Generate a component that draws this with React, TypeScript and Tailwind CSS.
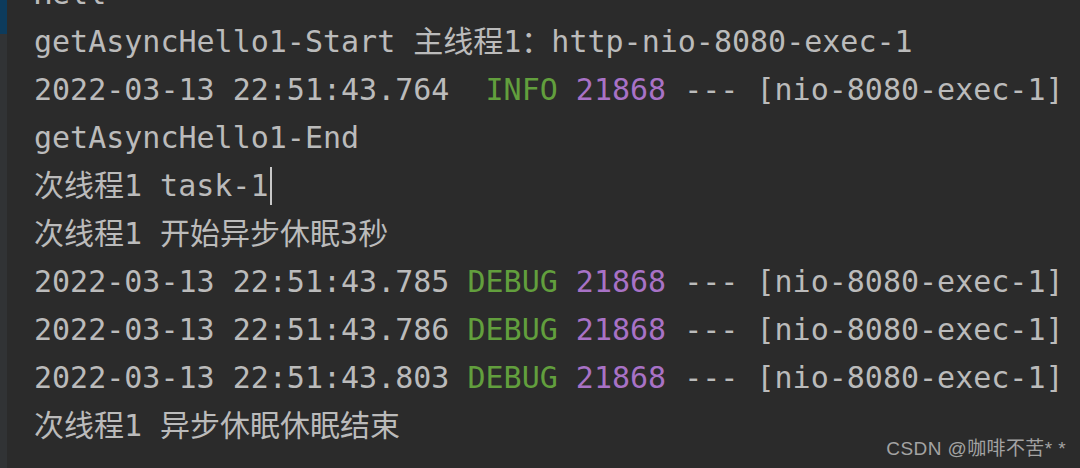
import React from "react";

type Seg = { t: string; c?: string };

const GREEN = "text-[#629f3d]";
const PURPLE = "text-[#a872c6]";

function logLine(ms: string, level: string, tail?: string): Seg[] {
  const segs: Seg[] = [
    { t: `2022-03-13 22:51:43.${ms} ` },
    { t: level, c: GREEN },
    { t: " " },
    { t: "21868", c: PURPLE },
    { t: " --- [nio-8080-exec-1]" },
  ];
  if (tail) segs.push({ t: tail, c: "text-[#2b7a78]" });
  return segs;
}

export default function App() {
  const lines: Seg[][] = [
    [{ t: "Hell" }],
    [{ t: "getAsyncHello1-Start 主线程1：http-nio-8080-exec-1" }],
    logLine("764", " INFO"),
    [{ t: "getAsyncHello1-End" }],
    [{ t: "次线程1 task-1" }],
    [{ t: "次线程1 开始异步休眠3秒" }],
    logLine("785", "DEBUG", " o.s.web"),
    logLine("786", "DEBUG", " o.s.web"),
    logLine("803", "DEBUG"),
    [{ t: "次线程1 异步休眠休眠结束" }],
  ];

  return (
    <div className="w-[1080px] h-[468px] bg-[#2b2b2b] flex overflow-hidden relative">
      {/* gutter */}
      <div className="w-[7px] shrink-0 bg-[#313335] flex flex-col">
        <div className="h-[34px] bg-[#0d3b5c]" />
      </div>

      <div className="flex-1 pl-[27px] -mt-[30px] flex flex-col text-[30px] leading-[48px] text-[#bbbbbb] font-['DejaVu_Sans_Mono','Noto_Sans_CJK_SC',monospace] whitespace-pre overflow-hidden">
        {lines.map((segs, i) => (
          <div key={i} className="h-[48px] flex items-center">
            <span>
              {segs.map((s, j) => (
                <span key={j} className={s.c}>
                  {s.t}
                </span>
              ))}
            </span>
            {i === 4 && <span className="inline-block w-[2px] h-[38px] bg-[#c8c8c8] ml-[1px]" />}
          </div>
        ))}
      </div>

      {/* watermark */}
      <div className="absolute right-[14px] bottom-[10px] text-[19px] leading-none tracking-[0.4px] text-[#a3a3a3] font-['Liberation_Sans','Noto_Sans_CJK_SC',sans-serif]">
        CSDN @咖啡不苦* *
      </div>
    </div>
  );
}
